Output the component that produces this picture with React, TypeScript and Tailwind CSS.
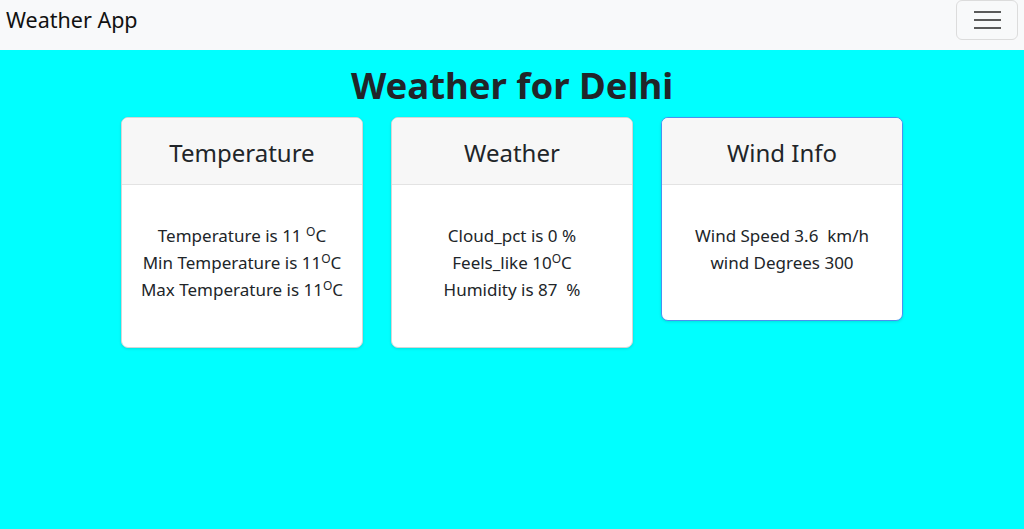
import React from "react";

const font = { fontFamily: '"Noto Sans", "Open Sans", Roboto, sans-serif' };

function Card({ title, lines, highlight }: { title: string; lines: React.ReactNode[]; highlight?: boolean }) {
  return (
    <div
      className={`w-[242px] rounded-[7px] bg-white border overflow-hidden shadow-[0_1px_3px_rgba(0,0,0,0.12)] ${
        highlight ? "border-[#4a90f0]" : "border-[#d5d5d5]"
      }`}
    >
      <div className="h-[67px] flex items-center justify-center bg-[#f7f7f7] border-b border-[#e3e3e3]">
        <span className="text-[24px] text-[#212529] leading-none mt-[3px]">{title}</span>
      </div>
      <div className="pt-[37px] pb-[44px] flex flex-col items-center text-[17px] leading-[27px] text-[#212529]">
        {lines.map((l, i) => (
          <div key={i}>{l}</div>
        ))}
      </div>
    </div>
  );
}

const Deg = () => (
  <>
    <span className="text-[12px] relative top-[-6px] leading-none">O</span>C
  </>
);

export default function App() {
  return (
    <div className="min-h-[529px] bg-[#00ffff]" style={font}>
      <nav className="h-[50px] bg-[#f8f9fa] flex items-start justify-between pl-[6px] pr-[6px]">
        <span className="text-[21.5px] text-[#111] mt-[6px] leading-[28px]">Weather App</span>
        <button className="w-[62px] h-[40px] border border-[#dcdcdc] rounded-[6px] flex flex-col items-center justify-center gap-[6px]">
          <span className="block w-[27px] h-[2px] bg-[#5a5a5a]" />
          <span className="block w-[27px] h-[2px] bg-[#5a5a5a]" />
          <span className="block w-[27px] h-[2px] bg-[#5a5a5a]" />
        </button>
      </nav>
      <h1 className="text-center font-bold text-[36.5px] leading-[48px] text-[#212529] mt-[11px] mb-[8px]">
        Weather for Delhi
      </h1>
      <div className="flex justify-center items-start gap-[28px]">
        <Card
          title="Temperature"
          lines={[
            <>Temperature is 11 <Deg /></>,
            <>Min Temperature is 11<Deg /></>,
            <>Max Temperature is 11<Deg /></>,
          ]}
        />
        <Card
          title="Weather"
          lines={[<>Cloud_pct is 0 %</>, <>Feels_like 10<Deg /></>, <>Humidity is 87&nbsp; %</>]}
        />
        <Card title="Wind Info" highlight lines={[<>Wind Speed 3.6&nbsp; km/h</>, <>wind Degrees 300</>]} />
      </div>
    </div>
  );
}
